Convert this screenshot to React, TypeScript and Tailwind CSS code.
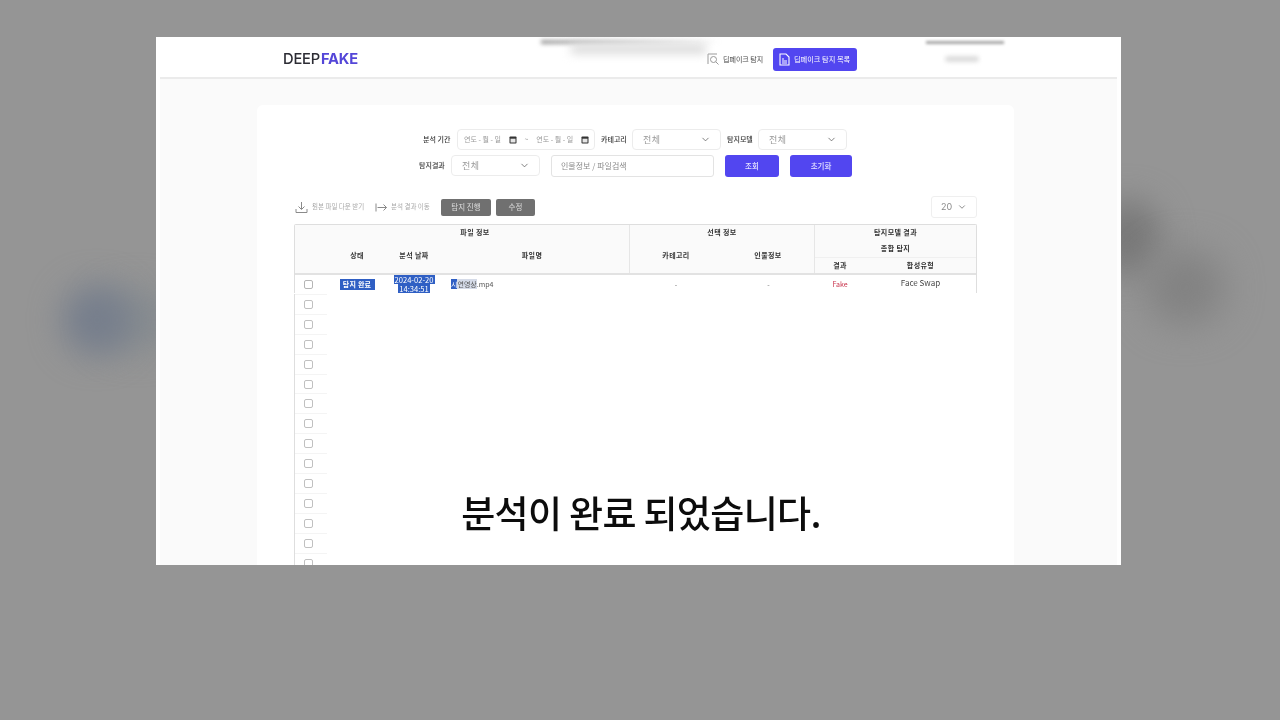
import React from 'react';
import { ChevronDown } from 'lucide-react';

const KR = "font-['Noto_Sans_CJK_KR','Noto_Sans',sans-serif]";

const Select = ({ w, value = '전체' }: { w: string; value?: string }) => (
  <div className={`${w} h-[21px] flex items-center justify-between pl-[10px] pr-[9px] bg-white border border-[#ececec] rounded-[4px] text-[9px] tracking-[0.5px] text-[#999] font-normal`}>
    <span>{value}</span>
    <ChevronDown size={11} strokeWidth={1.6} className="text-[#555]" />
  </div>
);

const CalendarIcon = () => (
  <svg width="8" height="8" viewBox="0 0 8 8">
    <rect x="0.5" y="0.5" width="7" height="7" rx="0.8" fill="#333" />
    <rect x="1.5" y="2.7" width="5" height="3.8" fill="#e6e6e6" />
  </svg>
);

const rows = Array.from({ length: 15 });

export default function App() {
  return (
    <div className={`relative w-[1280px] h-[720px] overflow-hidden bg-[#959595] ${KR}`}>
      {/* blurred video behind */}
      <div className="absolute left-[95px] top-[290px] w-[80px] h-[60px] rounded-full bg-[#878c90] blur-[16px]" />
      <div className="absolute left-[62px] top-[285px] w-[70px] h-[70px] rounded-full bg-[#767e8c] blur-[16px]" />
      <div className="absolute left-[1095px] top-[200px] w-[65px] h-[75px] rounded-full bg-[#787878] blur-[16px]" />
      <div className="absolute left-[1145px] top-[250px] w-[80px] h-[75px] rounded-full bg-[#828282] blur-[18px]" />

      <div className="absolute left-[156px] top-[37px] w-[965px] h-[528px] bg-white overflow-hidden blur-[0.4px]">
        {/* header */}
        <div className="h-[42px] mx-[4px] pt-[4px] flex items-center border-b-2 border-[#ebebeb] pl-[123px]">
          <div className="flex items-center gap-[1px] w-[423px] font-['Inter',sans-serif] text-[14.7px] tracking-[-0.2px]">
            <span className="text-[#2c2c34] font-medium">DEEP</span>
            <span className="text-[#5446d8] font-bold">FAKE</span>
          </div>
          <div className="flex items-center gap-[3px] text-[7px] text-[#444] w-[66px]">
            <svg width="14" height="14" viewBox="0 0 14 14" fill="none" stroke="#999" strokeWidth="1">
              <path d="M2 12V2h9" />
              <circle cx="7.5" cy="7.5" r="3" />
              <path d="M9.8 9.8L12.5 12.5" />
            </svg>
            <span className="whitespace-nowrap">딥페이크 탐지</span>
          </div>
          <div className="flex items-center gap-[4px] w-[84px] h-[23px] ml-[1px] pl-[6px] bg-[#5246f0] rounded-[3px] text-[7.2px] text-white">
            <svg width="11" height="13" viewBox="0 0 11 13" fill="none" stroke="#fff" strokeWidth="1.1">
              <path d="M1 1h6l3 3v8H1z" />
              <path d="M3 8h5M3 10h5M3 6h2" />
            </svg>
            <span className="whitespace-nowrap">딥페이크 탐지 목록</span>
          </div>
          <div className="ml-[88px] w-[34px] h-[6px] bg-[#dcdcdc] rounded-full blur-[2px]" />
        </div>

        {/* page bg */}
        <div className="h-[486px] mx-[4px] bg-[#fafafa] pt-[26px] pl-[97px]">
          <div className="w-[757px] h-[460px] bg-white rounded-t-[6px] pt-[24px] overflow-hidden">
            {/* filters */}
            <div className="flex items-center h-[21px] pl-[166px] gap-[5px] text-[7px] text-[#333] font-medium whitespace-nowrap">
              <span className="w-[29px]">분석 기간</span>
              <div className="w-[138px] h-[21px] flex items-center pl-[6px] pr-[5px] justify-between border border-[#ececec] rounded-[4px] text-[7px] text-[#999] font-normal">
                <span>연도 - 월 - 일</span>
                <CalendarIcon />
                <span>~</span>
                <span>연도 - 월 - 일</span>
                <CalendarIcon />
              </div>
              <span className="w-[26px] ml-[1px]">카테고리</span>
              <Select w="w-[89px]" />
              <span className="w-[26px] ml-[1px]">탐지모델</span>
              <Select w="w-[89px]" />
            </div>
            <div className="flex items-center h-[23px] mt-[4px] pl-[162px] text-[7px] text-[#333] font-medium whitespace-nowrap">
              <span className="w-[27px]">탐지결과</span>
              <Select w="w-[89px] ml-[5px]" />
              <div className="w-[163px] h-[22px] ml-[11px] flex items-center pl-[9px] bg-white border border-[#e3e3e3] rounded-[3px] text-[8px] text-[#8a8a8a] font-normal">
                인물정보 / 파일검색
              </div>
              <div className="w-[54px] h-[22px] ml-[11px] flex items-center justify-center bg-[#5246f0] rounded-[3px] text-[7.5px] text-[#e4e2ff]">
                조회
              </div>
              <div className="w-[62px] h-[22px] ml-[11px] flex items-center justify-center bg-[#5246f0] rounded-[3px] text-[7.5px] text-[#e4e2ff]">
                초기화
              </div>
            </div>

            {/* toolbar */}
            <div className="relative flex items-center h-[22px] mt-[19px] ml-[37px] w-[683px] text-[6.5px] text-[#aaa] whitespace-nowrap">
              <svg width="13" height="13" viewBox="0 0 13 13" fill="none" stroke="#8a8a8a" strokeWidth="1" className="ml-[1px]">
                <path d="M6.5 1v7M3.5 5.5l3 3 3-3M1 8v3.5h11V8" />
              </svg>
              <span className="ml-[4px] w-[63px]">원본 파일 다운 받기</span>
              <svg width="13" height="11" viewBox="0 0 13 11" fill="none" stroke="#8a8a8a" strokeWidth="1">
                <path d="M1 1.5v8M2.5 5.5h9M8.5 2.5l3 3-3 3" />
              </svg>
              <span className="ml-[3px] w-[44px]">분석 결과 이동</span>
              <div className="ml-[6px] w-[50px] h-[17px] flex items-center justify-center bg-[#707070] rounded-[2px] text-[7.5px] text-[#ddd]">탐지 진행</div>
              <div className="ml-[5px] w-[39px] h-[17px] flex items-center justify-center bg-[#707070] rounded-[2px] text-[7.5px] text-[#ddd]">수정</div>
              <div className="ml-auto w-[46px] h-[22px] flex items-center justify-between px-[9px] border border-[#efefef] rounded-[3px] text-[9px] text-[#8a8a8a]">
                <span className="font-['Inter',sans-serif]">20</span>
                <ChevronDown size={10} strokeWidth={1.6} className="text-[#555]" />
              </div>
            </div>

            {/* table */}
            <div className="mt-[6px] ml-[37px] w-[683px] border border-[#dedede] border-b-0 rounded-t-[2px] text-[7px] text-[#333] whitespace-nowrap">
              <div className="flex h-[50px] bg-[#fafafa] border-b-2 border-[#e2e2e2] font-bold tracking-[0.4px]">
                <div className="w-[335px] flex flex-col border-r border-[#e6e6e6]">
                  <div className="h-[15px] flex items-center justify-center pl-[26px]">파일 정보</div>
                  <div className="flex flex-1 items-center pb-[2px]">
                    <span className="w-[26px]" />
                    <span className="w-[72px] text-center">상태</span>
                    <span className="w-[42px] text-center">분석 날짜</span>
                    <span className="flex-1 text-center">파일명</span>
                  </div>
                </div>
                <div className="w-[185px] flex flex-col border-r border-[#e6e6e6]">
                  <div className="h-[15px] flex items-center justify-center">선택 정보</div>
                  <div className="flex flex-1 items-center pb-[2px]">
                    <span className="w-[92px] text-center">카테고리</span>
                    <span className="flex-1 text-center">인물정보</span>
                  </div>
                </div>
                <div className="flex-1 flex flex-col">
                  <div className="h-[15px] flex items-center justify-center">탐지모델 결과</div>
                  <div className="h-[17px] flex items-center justify-center">종합 탐지</div>
                  <div className="flex flex-1 items-center border-t border-[#f0f0f0]">
                    <span className="w-[50px] text-center">결과</span>
                    <span className="flex-1 text-center">합성유형</span>
                  </div>
                </div>
              </div>
              <div className="h-[18px] flex items-center font-normal">
                <div className="w-[26px] flex justify-center">
                  <div className="w-[9px] h-[9px] border border-[#b5b5b5] rounded-[2px]" />
                </div>
                <div className="w-[72px] flex justify-center">
                  <span className="px-[1px] w-[35px] text-center bg-[#2f5fc4] text-white font-bold leading-[11px] tracking-[0.2px]">탐지 완료</span>
                </div>
                <div className="w-[42px] flex flex-col items-center text-[7.6px] leading-[9px] text-white">
                  <span className="px-[1px] bg-[#2f5fc4]">2024-02-20</span>
                  <span className="px-[1px] bg-[#2f5fc4]">14:34:51</span>
                </div>
                <div className="w-[195px] pl-[16px] flex items-center text-[7px] text-[#555]">
                  <span className="bg-[#2f5fc4] text-white">시</span>
                  <span className="bg-[#d5dbe8]">연영상</span>
                  <span>.mp4</span>
                </div>
                <span className="w-[92px] text-center text-[#777]">-</span>
                <span className="w-[93px] text-center text-[#777]">-</span>
                <span className="w-[50px] text-center text-[#c8324a]">Fake</span>
                <span className="flex-1 text-center text-[8px] text-[#444] -mt-[2px]">Face Swap</span>
              </div>
            </div>
            <div className="ml-[37px] w-[33px] border-l border-[#dedede] mt-[1px]">
              {rows.map((_, i) => (
                <div key={i} className="h-[19.9px] pr-[6px] flex items-center justify-center border-t border-[#f4f4f4]">
                  <div className="w-[9px] h-[9px] border border-[#c0c0c0] rounded-[2px]" />
                </div>
              ))}
            </div>
          </div>
        </div>

        {/* blurred top strips */}
        <div className="absolute left-[385px] top-[3px] w-[180px] h-[4px] bg-gradient-to-r from-[#9a9a9a] to-transparent blur-[2px]" />
        <div className="absolute left-[415px] top-[7px] w-[135px] h-[10px] bg-[#dcdcdc] blur-[5px]" />
        <div className="absolute left-[770px] top-[4px] w-[78px] h-[3px] bg-[#a5a5a5] blur-[1.5px]" />

        {/* subtitle */}
        <div className="absolute left-0 right-0 top-[447px] pl-[5px] text-center text-[37px] leading-[56px] font-medium tracking-[-0.65px] text-[#0c0c0c]">
          분석이 완료 되었습니다.
        </div>
      </div>
    </div>
  );
}
